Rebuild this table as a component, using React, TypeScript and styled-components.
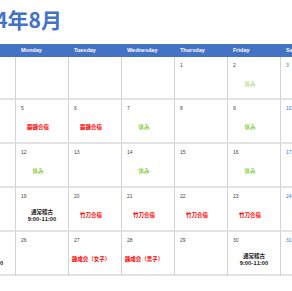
import React from "react";
import { styled, createGlobalStyle } from "styled-components";

const Global = createGlobalStyle`
  html, body {
    margin: 0;
    padding: 0;
    background: #fff;
    overflow: hidden;
  }
`;

// Colours
const BLUE = "#4472c4";
const RED = "#ff0000";

type Kind = "off" | "offLight" | "camp" | "practice";

const kindColor: Record<Kind, string> = {
  off: "#8fce4c",
  offLight: "#bfe09a",
  camp: RED,
  practice: "#1a1a1a",
};

const Page = styled.div`
  margin-left: -38px;
  width: 371px;
`;

const Title = styled.h1`
  margin: 0;
  height: 44px;
  padding: 8px 0 0 0;
  box-sizing: border-box;
  text-indent: -4px;
  font: bold 21px/22px "Noto Sans CJK JP", sans-serif;
  color: ${BLUE};
`;

const Head = styled.div`
  display: grid;
  grid-template-columns: repeat(7, 53px);
  height: 13px;
  background: ${BLUE};
`;

const HeadCell = styled.div`
  padding-left: 6px;
  font: bold 5.5px/13px "Liberation Sans", Arial, sans-serif;
  color: #fff;
`;

const Body = styled.div`
  display: grid;
  grid-template-columns: repeat(7, 53px);
  grid-template-rows: 43px repeat(4, 44px);
`;

const Cell = styled.div`
  display: flex;
  flex-direction: column;
  box-sizing: border-box;
  border-left: 1px solid #d3d3d3;
  border-bottom: 2px solid #e3e3e3;
  min-width: 0;
`;

const Num = styled.div<{ $sat: boolean; $sun: boolean }>`
  height: 10px;
  padding: 6px 0 0 5px;
  box-sizing: border-box;
  font: 5px/5px "Liberation Sans", Arial, sans-serif;
  color: ${($) => ($.$sat ? BLUE : $.$sun ? RED : "#444")};
`;

const EventBox = styled.div<{ $kind: Kind }>`
  flex: 1;
  display: flex;
  align-items: center;
  justify-content: center;
  padding: 3px ${($) => ($.$kind === "practice" ? 0 : 8)}px 0 0;
  text-align: center;
  white-space: nowrap;
  font: bold 5.5px/7px "Noto Sans CJK JP", sans-serif;
  color: ${($) => kindColor[$.$kind]};
`;

type Day = { n: number; kind?: Kind; lines?: string[] };

const days: Record<number, Day> = {
  2: { n: 2, kind: "offLight", lines: ["休み"] },
  5: { n: 5, kind: "camp", lines: ["鍛錬合宿"] },
  6: { n: 6, kind: "camp", lines: ["鍛錬合宿"] },
  7: { n: 7, kind: "off", lines: ["休み"] },
  9: { n: 9, kind: "off", lines: ["休み"] },
  12: { n: 12, kind: "off", lines: ["休み"] },
  14: { n: 14, kind: "off", lines: ["休み"] },
  16: { n: 16, kind: "off", lines: ["休み"] },
  19: { n: 19, kind: "practice", lines: ["通常稽古", "9:00-11:00"] },
  20: { n: 20, kind: "camp", lines: ["竹刀合宿"] },
  21: { n: 21, kind: "camp", lines: ["竹刀合宿"] },
  22: { n: 22, kind: "camp", lines: ["竹刀合宿"] },
  23: { n: 23, kind: "camp", lines: ["竹刀合宿"] },
  24: { n: 24, kind: "camp", lines: ["竹刀合宿"] },
  25: { n: 25, kind: "practice", lines: ["通常稽古", "9:00-11:00"] },
  27: { n: 27, kind: "camp", lines: ["錬成会（女子）"] },
  28: { n: 28, kind: "camp", lines: ["錬成会（男子）"] },
  30: { n: 30, kind: "practice", lines: ["通常稽古", "9:00-11:00"] },
};

const weekdays = [
  "Sunday",
  "Monday",
  "Tuesday",
  "Wednesday",
  "Thursday",
  "Friday",
  "Saturday",
];

// August 2024 starts on a Thursday
const firstWeekday = 4;

export default function App() {
  const cells: (number | null)[] = [];
  for (let i = 0; i < 35; i++) {
    const d = i - firstWeekday + 1;
    cells.push(d >= 1 && d <= 31 ? d : null);
  }

  return (
    <>
      <Global />
      <Page>
        <Title>2024年8月</Title>
        <Head>
          {weekdays.map((w) => (
            <HeadCell key={w}>{w}</HeadCell>
          ))}
        </Head>
        <Body>
          {cells.map((d, i) => {
            const col = i % 7;
            const info = d ? days[d] : undefined;
            return (
              <Cell key={i}>
                <Num $sat={col === 6} $sun={col === 0}>
                  {d ?? ""}
                </Num>
                {info?.kind && (
                  <EventBox $kind={info.kind}>
                    <div>
                      {info.lines!.map((l) => (
                        <div key={l}>{l}</div>
                      ))}
                    </div>
                  </EventBox>
                )}
              </Cell>
            );
          })}
        </Body>
      </Page>
    </>
  );
}
